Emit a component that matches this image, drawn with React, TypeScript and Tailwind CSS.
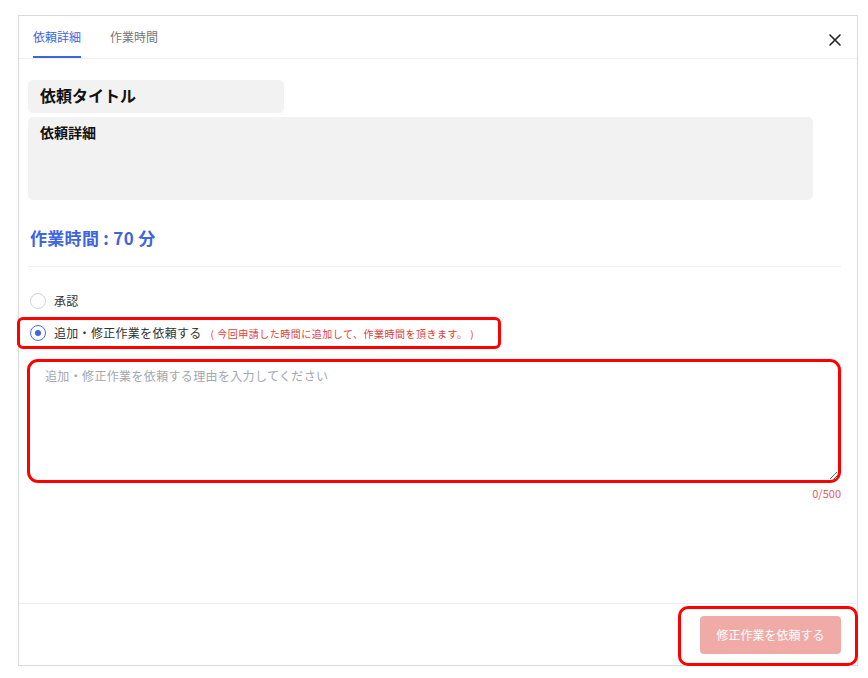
import React from 'react'

const font = { fontFamily: '"Noto Sans CJK JP", "Noto Sans", sans-serif' }

function Radio({ checked, label, note }: { checked?: boolean; label: string; note?: string }) {
  return (
    <label className="flex items-center h-5 gap-2">
      <span
        className={
          checked
            ? 'w-4 h-4 rounded-full border border-[#4a6cf7] flex items-center justify-center bg-white'
            : 'w-4 h-4 rounded-full border border-[#d5d5d5] bg-white'
        }
      >
        {checked && <span className="w-[6px] h-[6px] rounded-full bg-[#3e64de]" />}
      </span>
      <span className="text-[12px] tracking-[0.3px] text-[#333]">{label}</span>
      {note && <span className="text-[10px] tracking-[0.5px] text-[#e23b3b] ml-[1px]">{note}</span>}
    </label>
  )
}

export default function App() {
  return (
    <div className="w-[868px] h-[678px] bg-white pt-[15px] pl-[18px]" style={font}>
      <div className="relative w-[840px] h-[651px] border border-[#d8d9de] flex flex-col">
        <div className="h-[43px] border-b border-[#eeeeee] flex items-stretch px-[14px] relative">
          <div className="flex items-center gap-[29px]">
            <div className="relative h-full flex items-center">
              <span className="text-[12px] text-[#3e64de]">依頼詳細</span>
              <span className="absolute left-0 right-0 bottom-0 h-[2px] bg-[#3e64de]" />
            </div>
            <span className="text-[12px] text-[#777]">作業時間</span>
          </div>
          <button className="ml-auto mr-[2px] self-center mt-[6px]">
            <svg width="12" height="12" viewBox="0 0 12 12">
              <path d="M1 1L11 11M11 1L1 11" stroke="#222" strokeWidth="1.6" strokeLinecap="round" />
            </svg>
          </button>
        </div>

        <div className="flex-1 pl-[9px] pr-[16px] pt-[21px]">
          <div className="w-[256px] h-[33px] bg-[#f2f2f2] rounded-[5px] flex items-center px-[12px] pb-[3px]">
            <span className="text-[16px] font-bold text-[#111]">依頼タイトル</span>
          </div>
          <div className="mt-[4px] w-[785px] h-[83px] bg-[#f2f2f2] rounded-[5px] px-[12px] pt-[2px]">
            <span className="text-[14px] font-bold text-[#111]">依頼詳細</span>
          </div>

          <div className="mt-[26px] pl-[2px] text-[17px] leading-6 font-bold text-[#3e64de] tracking-[0.3px]">作業時間 : 70 分</div>
          <div className="mt-[16px] border-t border-[#eeeeee]" />

          <div className="mt-[24px] pl-[2px]">
            <Radio label="承認" />
          </div>
          <div className="mt-[12px] pl-[2px] relative">
            <Radio checked label="追加・修正作業を依頼する" note="( 今回申請した時間に追加して、作業時間を頂きます。 )" />
            <span className="absolute -left-[11px] -top-[6px] w-[484px] h-[32px] border-[3px] border-[#ff0000] rounded-[6px] pointer-events-none" />
          </div>

          <textarea
            className="mt-[16px] -ml-[1px] block w-[814px] h-[124px] border-[3px] border-[#ff0000] rounded-[11px] px-[15px] py-[4px] text-[12px] tracking-[0.35px] leading-5 outline-none placeholder:text-[#a3a7ae]"
            placeholder="追加・修正作業を依頼する理由を入力してください"
            style={font}
          />
          <div className="mt-[2px] text-right text-[11px] leading-4 text-[#e06060]">0/500</div>
        </div>

        <div className="h-[62px] border-t border-[#eeeeee] flex items-center justify-end pr-[16px]">
          <button className="h-[38px] w-[141px] rounded-[4px] bg-[#f0aba7] text-white text-[12px]">修正作業を依頼する</button>
        </div>
        <span className="absolute -right-[1px] -bottom-[1px] w-[180px] h-[60px] border-[3px] border-[#ff0000] rounded-[10px] pointer-events-none" />
      </div>
    </div>
  )
}
